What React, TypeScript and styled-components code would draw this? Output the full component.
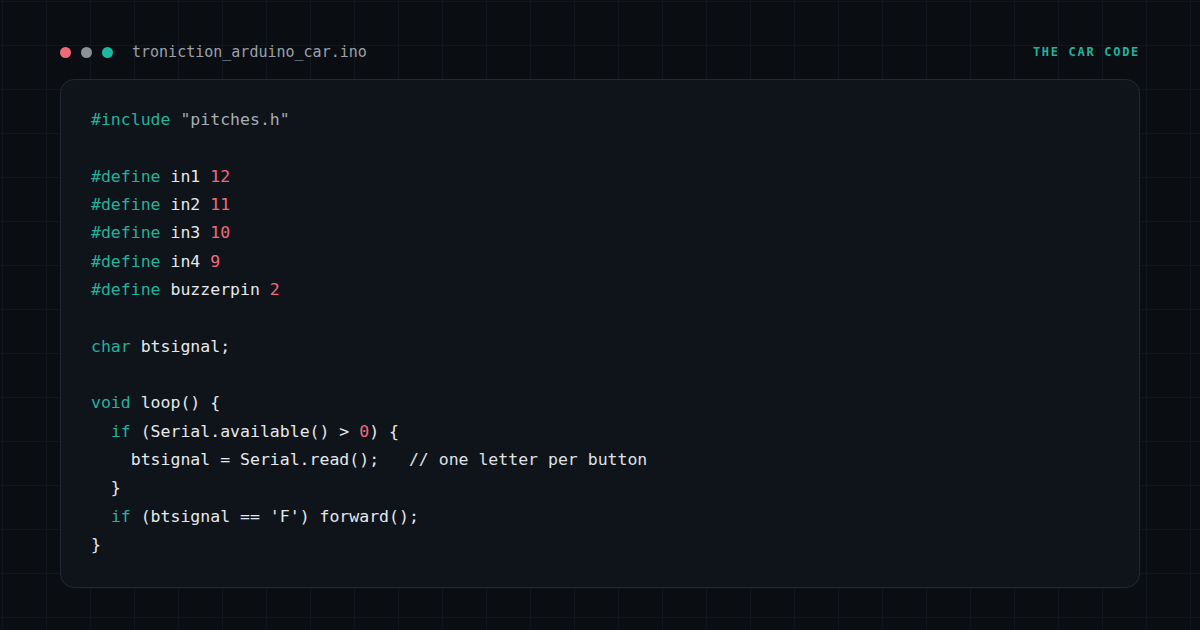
import React from "react";
import styled, { createGlobalStyle } from "styled-components";

const Global = createGlobalStyle`
  html, body { margin: 0; padding: 0; }
  body {
    width: 1200px;
    height: 630px;
    overflow: hidden;
    background-color: #0a0d12;
    background-image:
      linear-gradient(to right, #12161d 1px, transparent 1px),
      linear-gradient(to bottom, #12161d 1px, transparent 1px);
    background-size: 44px 44px;
    background-position: 2px 1px;
    font-family: "DejaVu Sans Mono", "Liberation Mono", monospace;
  }
`;

const Frame = styled.div`
  box-sizing: border-box;
  width: 1200px;
  height: 630px;
  padding: 41px 60px 0;
  display: flex;
  flex-direction: column;
`;

const Header = styled.div`
  height: 22px;
  display: flex;
  align-items: center;
  justify-content: space-between;
  margin-bottom: 16px;
`;

const Left = styled.div`
  display: flex;
  align-items: center;
`;

const Dots = styled.div`
  display: flex;
  gap: 10px;
  margin-right: 19px;
`;

const Dot = styled.span<{ $c: string }>`
  width: 11px;
  height: 11px;
  border-radius: 50%;
  background: ${(p) => p.$c};
`;

const FileName = styled.span`
  font-size: 15px;
  color: #9ba1a9;
`;

const Tag = styled.span`
  font-size: 12px;
  font-weight: bold;
  letter-spacing: 1.7px;
  margin-right: 0;
  color: #22b39d;
`;

const Card = styled.div`
  box-sizing: border-box;
  width: 1080px;
  border: 1px solid #222932;
  border-radius: 14px;
  background: #0f141a;
  padding: 26px 30px 28px;
`;

const Line = styled.div`
  font-size: 16.5px;
  line-height: 28.33px;
  height: 28.33px;
  white-space: pre;
  color: #e6e9ec;
`;

const Tok = styled.span<{ $k: "kw" | "num" | "str" | "txt" | "cm" }>`
  color: ${(p) =>
    p.$k === "kw"
      ? "#23b29c"
      : p.$k === "num"
      ? "#ef6b7c"
      : p.$k === "str"
      ? "#a6adb5"
      : p.$k === "cm"
      ? "#dfe2e6"
      : "#e6e9ec"};
`;

type T = [string, "kw" | "num" | "str" | "txt" | "cm"];

const code: T[][] = [
  [["#include", "kw"], [" ", "txt"], ['"pitches.h"', "str"]],
  [],
  [["#define", "kw"], [" in1 ", "txt"], ["12", "num"]],
  [["#define", "kw"], [" in2 ", "txt"], ["11", "num"]],
  [["#define", "kw"], [" in3 ", "txt"], ["10", "num"]],
  [["#define", "kw"], [" in4 ", "txt"], ["9", "num"]],
  [["#define", "kw"], [" buzzerpin ", "txt"], ["2", "num"]],
  [],
  [["char", "kw"], [" btsignal;", "txt"]],
  [],
  [["void", "kw"], [" loop() {", "txt"]],
  [["  ", "txt"], ["if", "kw"], [" (Serial.available() > ", "txt"], ["0", "num"], [") {", "txt"]],
  [["    btsignal = Serial.read();   ", "txt"], ["// one letter per button", "cm"]],
  [["  }", "txt"]],
  [["  ", "txt"], ["if", "kw"], [" (btsignal == 'F') forward();", "txt"]],
  [["}", "txt"]],
];

export default function App() {
  return (
    <>
      <Global />
      <Frame>
        <Header>
          <Left>
            <Dots>
              <Dot $c="#f06a7b" />
              <Dot $c="#8b9199" />
              <Dot $c="#1fb7a0" />
            </Dots>
            <FileName>troniction_arduino_car.ino</FileName>
          </Left>
          <Tag>THE CAR CODE</Tag>
        </Header>
        <Card>
          {code.map((line, i) => (
            <Line key={i}>
              {line.length === 0
                ? " "
                : line.map(([t, k], j) => (
                    <Tok key={j} $k={k}>
                      {t}
                    </Tok>
                  ))}
            </Line>
          ))}
        </Card>
      </Frame>
    </>
  );
}
